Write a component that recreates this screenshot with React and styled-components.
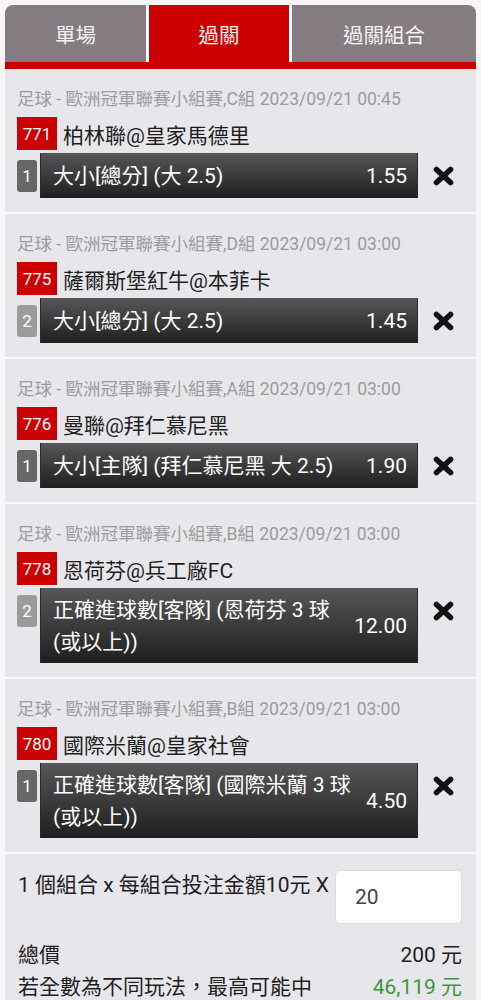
import styled, { createGlobalStyle } from 'styled-components';

const GlobalStyle = createGlobalStyle`
  body {
    margin: 0;
    background: #f6f6f6;
    font-family: Roboto, "Noto Sans CJK TC", sans-serif;
  }
`;

const Page = styled.div`
  padding: 5px 5px 0;
`;

const Tabs = styled.div`
  display: grid;
  grid-template-columns: 141px 140px 1fr;
  column-gap: 3px;
  background: #ffffff;
  border-radius: 8px 8px 0 0;
  overflow: hidden;
  border-bottom: 7px solid #cc0000;
`;

const Tab = styled.div`
  height: 57px;
  display: flex;
  align-items: center;
  justify-content: center;
  font-size: 20.5px;
  color: #f4f4f4;
  background: ${({ active }) => (active ? '#cc0000' : '#857c81')};
`;

const Card = styled.div`
  background: #e7e7eb;
  padding: 19px 0 14px 12px;
  border-bottom: 2px solid #f7f7f7;
`;

const League = styled.div`
  height: 22px;
  font-size: 17.5px;
  line-height: 22px;
  color: #9c9c9c;
  white-space: nowrap;
`;

const TeamRow = styled.div`
  display: flex;
  align-items: center;
  gap: 6px;
  margin-top: 7px;
  height: 33px;
`;

const Badge = styled.span`
  min-width: 40px;
  height: 33px;
  display: flex;
  align-items: center;
  justify-content: center;
  background: #cc0000;
  color: #fff;
  font-size: 17px;
`;

const Teams = styled.span`
  font-size: 21px;
  color: #1e1e1e;
`;

const PickRow = styled.div`
  display: flex;
  align-items: flex-start;
  margin-top: 3px;
`;

const Num = styled.span`
  flex: none;
  width: 20px;
  height: 32px;
  margin-top: 7px;
  margin-right: 3px;
  border-radius: 3px;
  display: flex;
  align-items: center;
  justify-content: center;
  font-size: 17px;
  color: #fff;
  background: ${({ light }) => (light ? '#9b9b9b' : '#676767')};
`;

const Bar = styled.div`
  flex: 1;
  box-sizing: border-box;
  min-height: 45px;
  display: flex;
  align-items: center;
  gap: 8px;
  padding: 6px 10px 5px 12px;
  background: linear-gradient(#575757, #1f1f1f);
  border: 1px solid #2a2a2a;
  border-width: 0 1px;
  color: #fff;
  font-size: 21px;
  line-height: 32px;
`;

const PickText = styled.span`
  flex: 1;
`;

const Odds = styled.span`
  flex: none;
`;

const Remove = styled.button`
  flex: none;
  width: 58px;
  padding: 12px 0 0 14px;
  border: none;
  background: none;
  display: flex;
  cursor: pointer;
`;

const Footer = styled.div`
  background: #e7e7eb;
  padding: 16px 14px 0 13px;
  font-size: 21px;
  color: #1e1e1e;
`;

const StakeRow = styled.div`
  display: flex;
  align-items: flex-start;
  justify-content: space-between;
`;

const StakeLabel = styled.span`
  height: 28px;
  line-height: 28px;
  padding-top: 1px;
  font-size: 21px;
  white-space: nowrap;
`;

const StakeInput = styled.input`
  width: 127px;
  height: 54px;
  box-sizing: border-box;
  border: 1px solid #dcdcdc;
  border-radius: 5px;
  padding: 0 0 0 19px;
  font: inherit;
  color: #444;
  background: #fff;
  outline: none;
`;

const SumRow = styled.div`
  display: flex;
  justify-content: space-between;
  height: 32px;
  line-height: 32px;
  margin-top: ${({ first }) => (first ? '15px' : '0')};
`;

const Amount = styled.span`
  color: ${({ win }) => (win ? '#3a973a' : '#1e1e1e')};
`;

const CrossIcon = () => (
  <svg width="23" height="22" viewBox="0 0 23 22">
    <path d="M4.5 4.5 L18.5 17.5 M18.5 4.5 L4.5 17.5" stroke="#111" strokeWidth="5.6" strokeLinecap="round" />
  </svg>
);

const bets = [
  { league: '足球 - 歐洲冠軍聯賽小組賽,C組 2023/09/21 00:45', no: '771', teams: '柏林聯@皇家馬德里', idx: '1', pick: '大小[總分] (大 2.5)', odds: '1.55' },
  { league: '足球 - 歐洲冠軍聯賽小組賽,D組 2023/09/21 03:00', no: '775', teams: '薩爾斯堡紅牛@本菲卡', idx: '2', pick: '大小[總分] (大 2.5)', odds: '1.45' },
  { league: '足球 - 歐洲冠軍聯賽小組賽,A組 2023/09/21 03:00', no: '776', teams: '曼聯@拜仁慕尼黑', idx: '1', pick: '大小[主隊] (拜仁慕尼黑 大 2.5)', odds: '1.90' },
  { league: '足球 - 歐洲冠軍聯賽小組賽,B組 2023/09/21 03:00', no: '778', teams: '恩荷芬@兵工廠FC', idx: '2', pick: '正確進球數[客隊] (恩荷芬 3 球 (或以上))', odds: '12.00' },
  { league: '足球 - 歐洲冠軍聯賽小組賽,B組 2023/09/21 03:00', no: '780', teams: '國際米蘭@皇家社會', idx: '1', pick: '正確進球數[客隊] (國際米蘭 3 球 (或以上))', odds: '4.50' },
];

const App = () => (
  <>
    <GlobalStyle />
    <Page>
      <Tabs>
        <Tab>單場</Tab>
        <Tab active>過關</Tab>
        <Tab>過關組合</Tab>
      </Tabs>

      {bets.map((b) => (
        <Card key={b.no}>
          <League>{b.league}</League>
          <TeamRow>
            <Badge>{b.no}</Badge>
            <Teams>{b.teams}</Teams>
          </TeamRow>
          <PickRow>
            <Num light={b.idx === '2'}>{b.idx}</Num>
            <Bar>
              <PickText>{b.pick}</PickText>
              <Odds>{b.odds}</Odds>
            </Bar>
            <Remove aria-label="remove">
              <CrossIcon />
            </Remove>
          </PickRow>
        </Card>
      ))}

      <Footer>
        <StakeRow>
          <StakeLabel>1 個組合 x 每組合投注金額10元 X</StakeLabel>
          <StakeInput defaultValue="20" />
        </StakeRow>
        <SumRow first>
          <span>總價</span>
          <Amount>200 元</Amount>
        </SumRow>
        <SumRow>
          <span>若全數為不同玩法，最高可能中</span>
          <Amount win>46,119 元</Amount>
        </SumRow>
      </Footer>
    </Page>
  </>
);

export default App;
